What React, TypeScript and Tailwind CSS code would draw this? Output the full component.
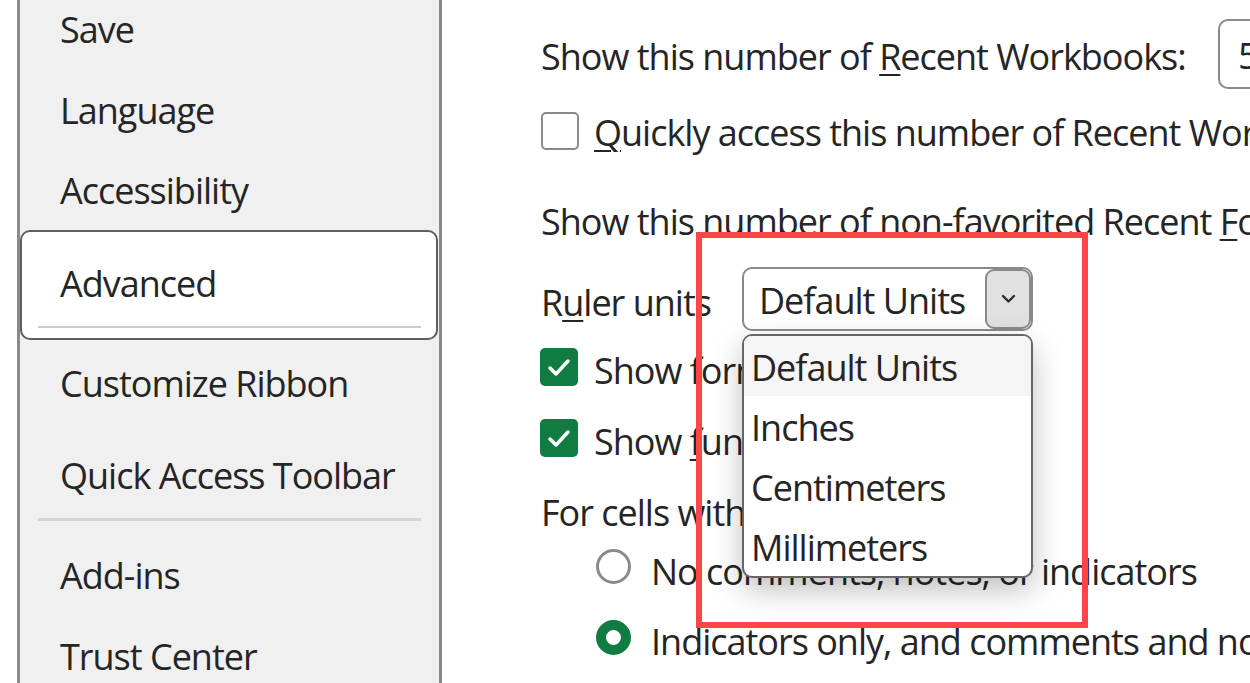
import React from "react";

const U = ({ children }: { children: React.ReactNode }) => (
  <span className="underline decoration-[2px] underline-offset-[4px]">{children}</span>
);

function Check() {
  return (
    <div className="w-[38px] h-[38px] rounded-[5px] bg-[#107c41] flex items-center justify-center shrink-0">
      <svg width="38" height="38" viewBox="0 0 38 38">
        <polyline points="10,20 16,26 28,13" fill="none" stroke="white" strokeWidth="3.5" strokeLinecap="round" strokeLinejoin="round" />
      </svg>
    </div>
  );
}

export default function App() {
  return (
    <div className="relative w-[1250px] h-[683px] overflow-hidden bg-white flex [font-family:'Open_Sans',sans-serif] text-[36px] leading-[40px] tracking-[-1px] text-[#252525] whitespace-nowrap">
      <div className="w-[17px] shrink-0" />
      <nav className="w-[425px] shrink-0 h-full bg-[#f0f0f0] border-x-[3px] border-[#8a8a8a] flex flex-col pt-[10px]">
        <div className="pl-[40px]">Save</div>
        <div className="pl-[40px] mt-[41px]">Language</div>
        <div className="pl-[40px] mt-[40px]">Accessibility</div>
        <div className="mt-[19px] mr-[1px] h-[110px] shrink-0 bg-white border-2 border-[#5f5f5f] rounded-[10px] pt-[32px] flex flex-col">
          <div className="pl-[38px]">Advanced</div>
          <div className="mt-[22px] ml-[16px] mr-[15px] h-[2px] bg-[#cccccc]" />
        </div>
        <div className="pl-[40px] mt-[24px]">Customize Ribbon</div>
        <div className="pl-[40px] mt-[52px]">Quick Access Toolbar</div>
        <div className="mt-[22px] ml-[18px] w-[383px] h-[3px] shrink-0 bg-[#d4d4d4]" />
        <div className="pl-[40px] mt-[35px]">Add-ins</div>
        <div className="pl-[40px] mt-[41px]">Trust Center</div>
      </nav>

      <main className="ml-[99px] flex flex-col">
        <div className="flex items-start mt-[19px]">
          <div className="w-[677px] shrink-0 mt-[18px]">
            Show this number of <U>R</U>ecent Workbooks:
          </div>
          <div className="h-[70px] w-[80px] shrink-0 border-2 border-[#8a8a8a] rounded-[10px] pl-[18px] pt-[4px] flex items-center">5</div>
        </div>

        <div className="flex items-start mt-[22px] h-[42px]">
          <div className="w-[38px] h-[38px] mt-[1px] shrink-0 border-2 border-[#8a8a8a] rounded-[5px] bg-white" />
          <div className="ml-[15px] mt-[2px]">
            <U>Q</U>uickly access this number of Recent Workbooks:
          </div>
        </div>

        <div className="mt-[49px]">
          Show this number of non-favorited Recent <U>F</U>olders:
        </div>

        <div className="flex items-start mt-[25px]">
          <div className="w-[201px] shrink-0 mt-[16px]">
            R<U>u</U>ler units
          </div>
          <div className="relative w-[291px] h-[64px] shrink-0 border-2 border-[#8a8a8a] rounded-[10px] bg-white flex items-center justify-between pl-[15px]">
            <span className="mt-[4px]">Default Units</span>
            <div className="w-[46px] h-[60px] shrink-0 bg-[#e1e1e1] border-2 border-[#8a8a8a] rounded-[9px] flex items-center justify-center">
              <svg width="15" height="10" viewBox="0 0 15 10">
                <polyline points="2,2 7.5,7.5 13,2" fill="none" stroke="#2b2b2b" strokeWidth="2.4" strokeLinecap="round" strokeLinejoin="round" />
              </svg>
            </div>

            <div className="absolute z-10 left-[-2px] top-[65px] w-[291px] h-[244px] border-2 border-[#666666] rounded-[10px] bg-white overflow-hidden shadow-[0_12px_30px_rgba(0,0,0,0.25)] flex flex-col">
              <div className="h-[60px] shrink-0 bg-[#f5f5f5] flex items-center pl-[7px] pt-[4px]">Default Units</div>
              <div className="h-[60px] shrink-0 flex items-center pl-[7px] pt-[4px]">Inches</div>
              <div className="h-[60px] shrink-0 flex items-center pl-[7px] pt-[4px]">Centimeters</div>
              <div className="h-[60px] shrink-0 flex items-center pl-[7px] pt-[4px]">Millimeters</div>
            </div>
          </div>
        </div>

        <div className="flex items-start mt-[17px] -ml-[1px]">
          <Check />
          <div className="ml-[16px] mt-[3px]">Show formula bar</div>
        </div>

        <div className="flex items-start mt-[28px] -ml-[1px]">
          <Check />
          <div className="ml-[16px] mt-[3px]">
            Show <U>f</U>unction ScreenTips
          </div>
        </div>

        <div className="mt-[31px]">For cells with comments, show:</div>

        <div className="flex items-start mt-[16px] pl-[55px]">
          <div className="w-[35px] h-[35px] shrink-0 rounded-full border-[3px] border-[#8a8a8a] bg-white" />
          <div className="ml-[20px] mt-[3px]">No comments, notes, or indicators</div>
        </div>

        <div className="flex items-start mt-[28px] pl-[55px]">
          <div className="w-[35px] h-[35px] shrink-0 rounded-full border-[10px] border-[#107c41] bg-white" />
          <div className="ml-[20px] mt-[2px]">Indicators only, and comments and notes on hover</div>
        </div>
      </main>

      <div className="absolute z-20 left-[696px] top-[232px] w-[392px] h-[396px] border-[6px] border-[#fd4446] pointer-events-none" />
    </div>
  );
}
